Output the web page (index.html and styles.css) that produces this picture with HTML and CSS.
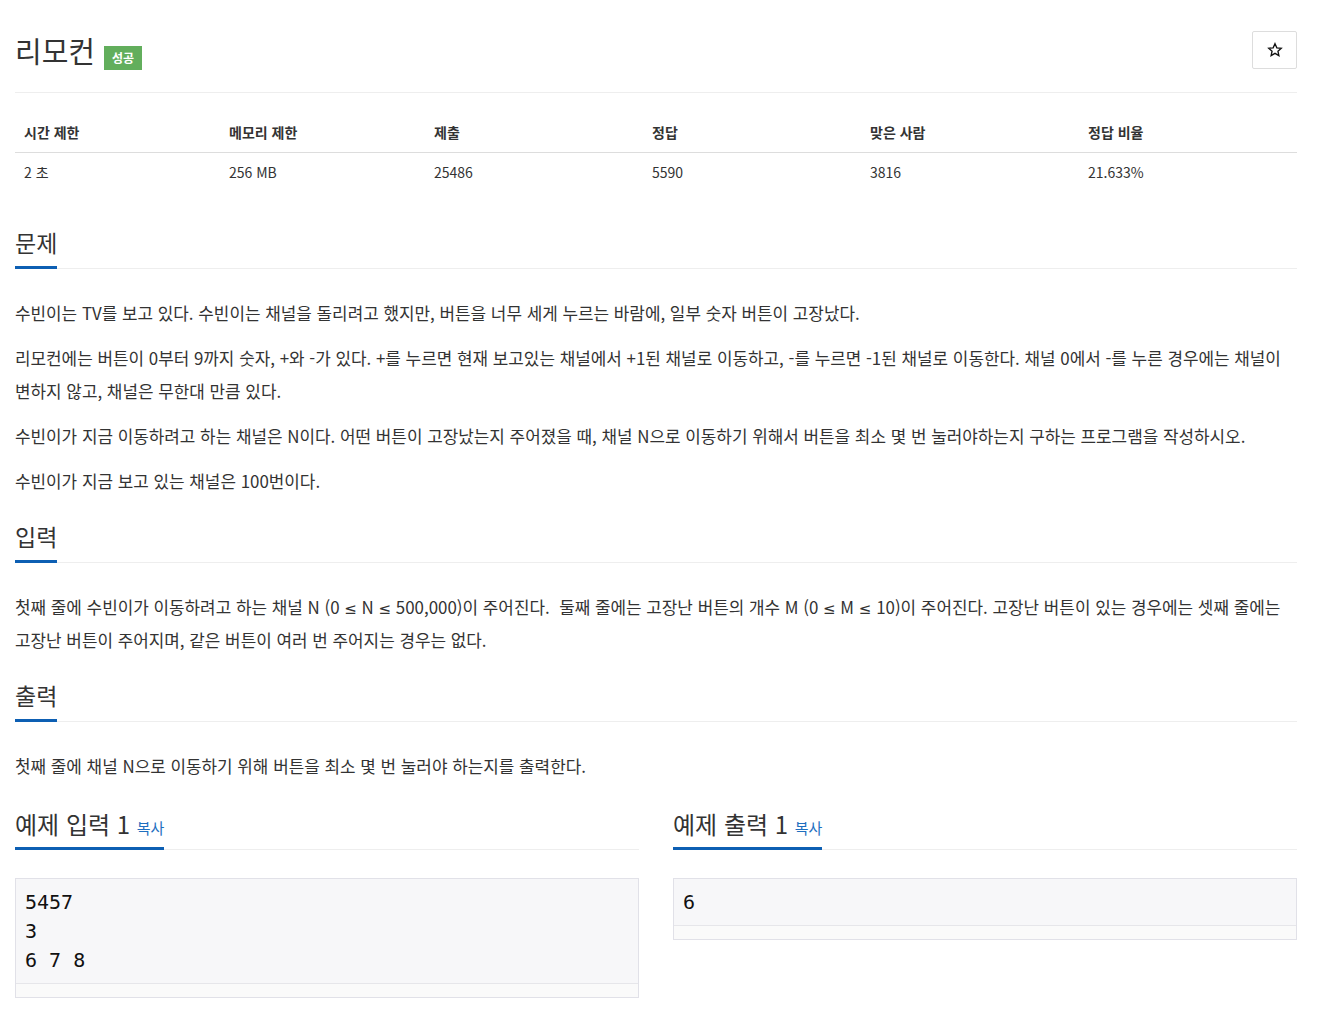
FILE: index.html
```html
<!DOCTYPE html>
<html lang="ko">
<head>
<meta charset="utf-8">
<title>리모컨</title>
<link rel="stylesheet" href="styles.css">
</head>
<body>
<div class="page">
  <div class="page-header">
    <h1 class="title"><span class="title-text">리모컨</span><span class="badge">성공</span></h1>
    <button class="star-btn" type="button" aria-label="즐겨찾기"><svg width="16" height="16" viewBox="0 0 24 24"><path d="M12 2.6l2.76 6.1 6.64.7-4.98 4.46 1.4 6.54L12 17.06 6.18 20.4l1.4-6.54L2.6 9.4l6.64-.7z" fill="none" stroke="#111" stroke-width="2" stroke-linejoin="miter"/></svg></button>
  </div>

  <table class="info">
    <thead>
      <tr><th>시간 제한</th><th>메모리 제한</th><th>제출</th><th>정답</th><th>맞은 사람</th><th>정답 비율</th></tr>
    </thead>
    <tbody>
      <tr><td>2 초</td><td>256 MB</td><td>25486</td><td>5590</td><td>3816</td><td>21.633%</td></tr>
    </tbody>
  </table>

  <section class="section">
    <div class="headline"><h2>문제</h2></div>
    <div class="text">
      <p>수빈이는 TV를 보고 있다. 수빈이는 채널을 돌리려고 했지만, 버튼을 너무 세게 누르는 바람에, 일부 숫자 버튼이 고장났다.</p>
      <p>리모컨에는 버튼이 0부터 9까지 숫자, +와 -가 있다. +를 누르면 현재 보고있는 채널에서 +1된 채널로 이동하고, -를 누르면 -1된 채널로 이동한다. 채널 0에서 -를 누른 경우에는 채널이 변하지 않고, 채널은 무한대 만큼 있다.</p>
      <p>수빈이가 지금 이동하려고 하는 채널은 N이다. 어떤 버튼이 고장났는지 주어졌을 때, 채널 N으로 이동하기 위해서 버튼을 최소 몇 번 눌러야하는지 구하는 프로그램을 작성하시오.</p>
      <p>수빈이가 지금 보고 있는 채널은 100번이다.</p>
    </div>
  </section>

  <section class="section">
    <div class="headline"><h2>입력</h2></div>
    <div class="text">
      <p>첫째 줄에 수빈이가 이동하려고 하는 채널 N (0 <span class="sym">≤</span> N <span class="sym">≤</span> 500,000)이 주어진다.&nbsp; 둘째 줄에는 고장난 버튼의 개수 M (0 <span class="sym">≤</span> M <span class="sym">≤</span> 10)이 주어진다. 고장난 버튼이 있는 경우에는 셋째 줄에는 고장난 버튼이 주어지며, 같은 버튼이 여러 번 주어지는 경우는 없다.</p>
    </div>
  </section>

  <section class="section">
    <div class="headline"><h2>출력</h2></div>
    <div class="text">
      <p>첫째 줄에 채널 N으로 이동하기 위해 버튼을 최소 몇 번 눌러야 하는지를 출력한다.</p>
    </div>
  </section>

  <div class="samples">
    <section class="sample">
      <div class="headline"><h2>예제 입력 1 <span class="copy">복사</span></h2></div>
      <div class="sample-box"><pre>5457
3
6 7 8</pre><div class="scroll"></div></div>
    </section>
    <section class="sample">
      <div class="headline"><h2>예제 출력 1 <span class="copy">복사</span></h2></div>
      <div class="sample-box"><pre>6</pre><div class="scroll"></div></div>
    </section>
  </div>
</div>
</body>
</html>
```
FILE: styles.css
```css
* { box-sizing: border-box; }
html, body { margin: 0; padding: 0; background: #fff; }
body {
  font-family: "Noto Sans CJK KR", "Noto Sans", sans-serif;
  color: #333;
}
.page { padding: 0 27px 0 15px; }

.page-header {
  display: flex;
  justify-content: space-between;
  align-items: flex-start;
  padding-top: 31px;
  padding-bottom: 22px;
  border-bottom: 1px solid #eee;
}
.title {
  margin: 0;
  display: flex;
  align-items: flex-start;
  font-weight: 400;
  font-size: 29px;
  line-height: 38px;
  color: #333;
}
.badge {
  display: inline-block;
  margin-left: 9px;
  margin-top: 15px;
  background: #62ae5c;
  color: #fff;
  font-size: 12px;
  font-weight: 700;
  line-height: 24px;
  height: 24px;
  padding: 0 8px;
}
.star-btn {
  width: 45px;
  height: 38px;
  border: 1px solid #ddd;
  border-radius: 2px;
  background: #fff;
  padding: 0;
  display: flex;
  align-items: center;
  justify-content: center;
}

.info {
  width: 100%;
  border-collapse: collapse;
  margin-top: 20px;
  font-size: 14px;
  table-layout: fixed;
}
.info th:nth-child(1), .info th:nth-child(2) { width: 205px; }
.info th:nth-child(3), .info th:nth-child(4), .info th:nth-child(5) { width: 218px; }
.info th, .info td {
  text-align: left;
  line-height: 19px;
}
.info th { font-weight: 700; border-bottom: 1px solid #ddd; padding: 10px 9px; }
.info td { font-weight: 400; padding: 10px 9px 9px; }

.headline {
  border-bottom: 1px solid #eee;
  margin-top: 23px;
  margin-bottom: 27px;
}
.section:first-of-type .headline { margin-top: 35px; }
.headline h2 {
  display: inline-block;
  margin: 0 0 -1px 0;
  font-size: 23px;
  font-weight: 400;
  line-height: 32px;
  padding-bottom: 8px;
  border-bottom: 3px solid #0d5fb3;
  color: #333;
}
.text p {
  margin: 0 0 12px 0;
  font-size: 16.9px;
  line-height: 33px;
}
.sym { display: inline-block; font-family: "DejaVu Sans", sans-serif; font-size: 15px; line-height: 18px; }
.copy { font-size: 15px; color: #1f6fbf; }

.samples {
  display: grid;
  grid-template-columns: 1fr 1fr;
  column-gap: 34px;
}
.sample .headline { margin-top: 15px; margin-bottom: 28px; }
.sample .headline h2 { font-size: 24px; line-height: 30px; padding-bottom: 4px; }
.sample-box {
  border: 1px solid #e1e1e8;
  background: #f7f7f9;
}
.sample-box pre {
  margin: 0;
  padding: 9px 9px 8px;
  font-family: "DejaVu Sans Mono", monospace;
  font-size: 20px;
  line-height: 29px;
  color: #111;
  border-bottom: 1px solid #e6e6ea;
}
.scroll { height: 13px; background: #fafafa; }
```
